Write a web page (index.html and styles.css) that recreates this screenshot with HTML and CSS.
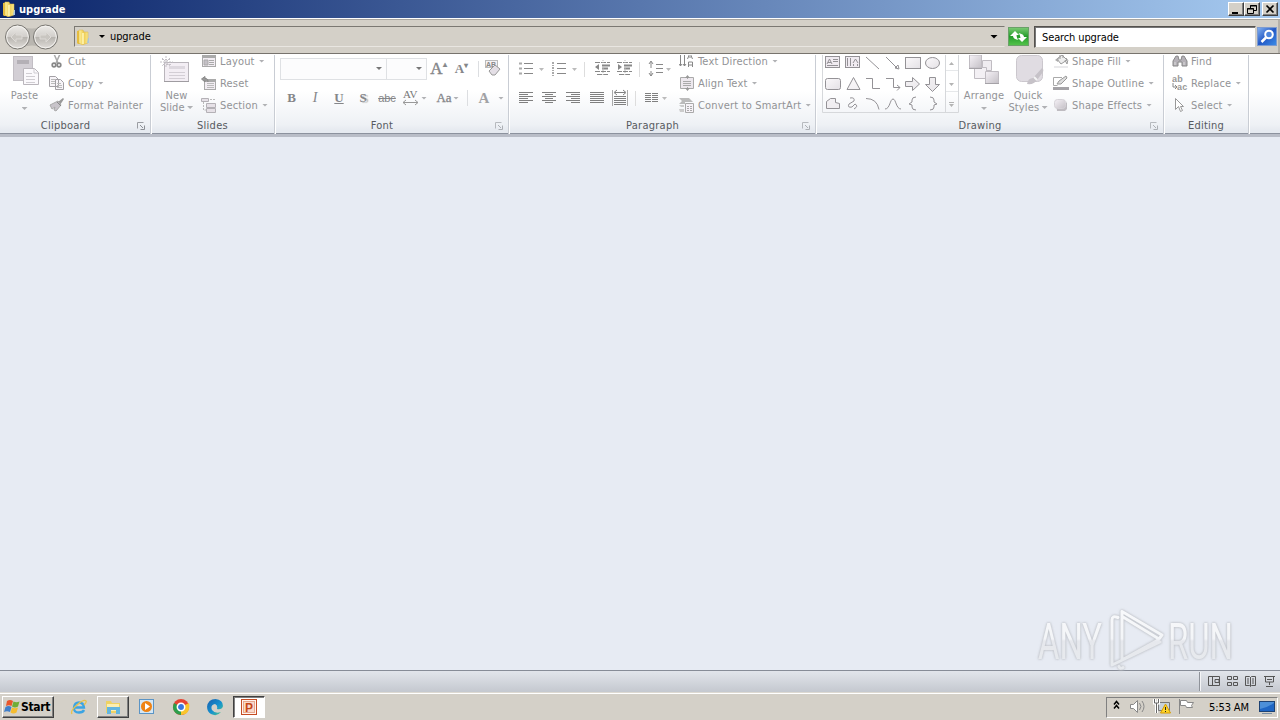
FILE: index.html
```html
<!DOCTYPE html>
<html lang="en">
<head>
<meta charset="utf-8">
<title>upgrade</title>
<link rel="stylesheet" href="styles.css">
</head>
<body>
<svg class="defs" width="0" height="0">
  <defs>
    <linearGradient id="gold" x2="1" y2="0"><stop stop-color="#fff3a0"/><stop offset=".5" stop-color="#eecb52"/><stop offset="1" stop-color="#f9e68a"/></linearGradient>
    <linearGradient id="grey" x2="1" y2="1"><stop stop-color="#f6f2f7"/><stop offset="1" stop-color="#c4c0c6"/></linearGradient>
    <linearGradient id="soft" x2="1" y2="1"><stop stop-color="#fbf9fb"/><stop offset="1" stop-color="#e4e1e5"/></linearGradient>
    <linearGradient id="ball" x2="0" y2="1"><stop stop-color="#eeece9"/><stop offset=".48" stop-color="#d2cfcb"/><stop offset=".52" stop-color="#b8b5b0"/><stop offset="1" stop-color="#e2dfdb"/></linearGradient>
    <linearGradient id="green" x2="0" y2="1"><stop stop-color="#7dcb75"/><stop offset=".5" stop-color="#259d2b"/><stop offset="1" stop-color="#55c44b"/></linearGradient>
    <linearGradient id="blue" x2="1" y2="1"><stop stop-color="#86b4f2"/><stop offset=".5" stop-color="#2459c5"/><stop offset="1" stop-color="#3d8ee8"/></linearGradient>
    <linearGradient id="edge" x2="1" y2="1"><stop stop-color="#1b5fae"/><stop offset=".55" stop-color="#1592cf"/><stop offset="1" stop-color="#54cd82"/></linearGradient>
    <linearGradient id="fade" gradientUnits="userSpaceOnUse" x1="0" y1="12" x2="0" y2="70"><stop stop-color="#fbfcfd"/><stop offset=".48" stop-color="#f6f7f9"/><stop offset=".52" stop-color="#e6e8ec"/><stop offset="1" stop-color="#e9ebef"/></linearGradient>
    <symbol id="folder" viewBox="0 0 16 16"><path d="M2 2l5-1v14H3l-1-1z" fill="#e7bd3e"/><path d="M4 1h4l1 2h4v11l-6 2-3-2z" fill="url(#gold)" stroke="#d9b54a" stroke-width=".5"/><path d="M8 4v11" stroke="#fff8bd" stroke-width="1.500"/><path d="M13 9h1v5h-2z" fill="#a9c6dc"/></symbol>
    <symbol id="launch" viewBox="0 0 8 8"><path d="M.5 6.500v-6h6" fill="none" stroke="#9a9da2"/><path d="M3 3l3 3M7.500 3.500v4h-4" fill="none" stroke="#8d9095"/></symbol>
  </defs>
</svg>

<header class="titlebar">
  <svg width="16" height="16"><use href="#folder"/></svg>
  <h1>upgrade</h1>
  <div class="winbtns">
    <svg width="16" height="14" class="wb"><path d="M3 10h6" stroke="#000" stroke-width="2"/></svg>
    <svg width="16" height="14" class="wb"><path d="M5.500 5V2.500h6v5H9M5 3h7M2.500 5.500h6v5h-6zM2 6h7" fill="none" stroke="#000"/></svg>
    <svg width="16" height="14" class="wb gap"><path d="M3.500 2.500l7 7M10.500 2.500l-7 7" stroke="#000" stroke-width="1.700"/></svg>
  </div>
</header>

<nav class="address">
  <svg class="navs" width="58" height="30" viewBox="0 0 58 30">
    <path d="M14 4Q29 9 44 4V26Q29 21 14 26z" fill="#b9b6b0"/>
    <g stroke="#777570"><circle cx="14.500" cy="15" r="12" fill="url(#ball)"/><circle cx="42.500" cy="15" r="12" fill="url(#ball)"/></g>
    <g fill="none" stroke="#f4f2ef"><circle cx="14.500" cy="15" r="10.800"/><circle cx="42.500" cy="15" r="10.800"/></g>
    <path d="M8 15l5-5v3h6v4h-6v3zM48 15l-5-5v3h-6v4h6v3z" fill="#c9c6c1" stroke="#dddad6"/>
  </svg>
  <div class="field">
    <svg width="16" height="16"><use href="#folder"/></svg>
    <i class="arr dark"></i><span class="crumb">upgrade</span><i class="arr dark big"></i>
  </div>
  <svg class="refresh" width="21" height="21"><rect x=".5" y="1.500" width="20" height="18" fill="url(#green)" stroke="#6aa068"/><path d="M2 10l5-5 4 4H8.500q0 3 2 5-5.500-1-5.500-4zM19 11l-5 5-4-4h2.500q0-3-2-5 5.500 1 5.500 4z" fill="#fff"/></svg>
  <div class="search">Search upgrade</div>
  <svg width="21" height="21"><rect x=".5" y="1.500" width="19" height="18" fill="url(#blue)" stroke="#7d9bd0"/><circle cx="12" cy="8.500" r="3.800" fill="#4d84dc" stroke="#fff" stroke-width="2"/><path d="M9 11.500l-4.500 4.500" stroke="#fff" stroke-width="2.500"/></svg>
</nav>

<section class="ribbon">
  <div class="group clipboard">
    <div class="body">
      <div class="bigbtn paste">
        <svg width="30" height="34" viewBox="0 0 30 34"><rect x="3.500" y="1.500" width="19" height="24" fill="#d3cfd5" stroke="#c2bec4"/><path d="M7 5h12v4H7z" fill="#b4b0b6"/><path d="M13.500 13.500h11l4 4v12h-15z" fill="#fbf9fc" stroke="#bab6bc"/><path d="M24 14v4h4M16 18.500h6M16 21.500h9M16 24.500h9M16 27.500h9" stroke="#d0cdd2" fill="none"/></svg>
        <span>Paste</span><i class="arr"></i>
      </div>
      <div class="list">
        <div class="row"><svg width="16" height="16"><path d="M5 1l4 9M11 1L7 10" stroke="#aaa" stroke-width="1.500"/><g fill="none" stroke="#888" stroke-width="1.700"><circle cx="5" cy="12" r="1.800"/><circle cx="10" cy="12" r="1.800"/></g></svg><span>Cut</span></div>
        <div class="row"><svg width="16" height="16"><g fill="#f7f4f8" stroke="#a3a0a5"><path d="M.5 1.500h6l3 3v7h-9zM6.500 4.500h5l3 3v7h-8z"/><path d="M2 4.500h4M2 6.500h4M2 8.500h4M8 8.500h4M8 10.500h5M8 12.500h5" stroke="#bbb"/></g></svg><span>Copy</span><i class="arr"></i></div>
        <div class="row"><svg width="16" height="16"><path d="M9 5l5-4 1 1-4 6z" fill="#999"/><path d="M1 8l8-4 3 4-5 6-2-1 1-3-3 2z" fill="#c8c4ca" stroke="#aaa"/><path d="M8 5l4 4" stroke="#888"/></svg><span>Format Painter</span></div>
      </div>
    </div>
    <footer>Clipboard<svg class="launch"><use href="#launch"/></svg></footer>
  </div>

  <div class="group slides">
    <div class="body">
      <div class="bigbtn new">
        <svg width="32" height="34" viewBox="0 0 32 34"><rect x="4.500" y="7.500" width="24" height="19" fill="#f3eef4" stroke="#b9b5bb"/><path d="M4 26.500h25" stroke="#9f9ca1"/><path d="M9 11h16v3H9z" fill="#ddd8df"/><path d="M9 17.500h16M9 20.500h16M9 23.500h16" stroke="#d3ced5"/><path d="M6 1v12M0 7h13M2 3l8 8M10 3l-8 8M2 4.500h9M3 9.500h8" stroke="#c4c0c6" stroke-dasharray="2 1"/></svg>
        <span>New</span><span>Slide <i class="arr"></i></span>
      </div>
      <div class="list">
        <div class="row"><svg width="16" height="16"><rect x="1.500" y="2.500" width="13" height="11" fill="#f2edf3" stroke="#aaa"/><path d="M2 4h12" stroke="#aaa" stroke-width="2"/><path d="M3 7h4v5H3zM8 7.500h5M8 9.500h5M8 11.500h5" fill="#c4c0c6" stroke="#aaa"/></svg><span>Layout</span><i class="arr"></i></div>
        <div class="row"><svg width="16" height="16"><rect x="3.500" y="4.500" width="11" height="10" fill="#f2edf3" stroke="#aaa"/><path d="M3 6h12" stroke="#aaa" stroke-width="2"/><path d="M6 8.500h7M6 10.500h7M6 12.500h7" stroke="#bbb"/><path d="M7 7Q7 3 4 3.500V1.500L.5 4l3.500 3V5" fill="#999" stroke="#888"/></svg><span>Reset</span></div>
        <div class="row"><svg width="16" height="16"><path d="M.5 1.500h7v3h-7zM5.500 6.500h9v4h-9zM5.500 11.500h9v4h-9z" fill="#e6e1e7" stroke="#b4b1b6"/><path d="M9 2.500h5M2.500 5v8H5" stroke="#bbb" stroke-dasharray="2 1" fill="none"/></svg><span>Section</span><i class="arr"></i></div>
      </div>
    </div>
    <footer>Slides</footer>
  </div>

  <div class="group font">
    <div class="body stack">
      <div class="tools first">
        <div class="combo wide"><i class="arr mid"></i></div><div class="combo"><i class="arr mid"></i></div>
        <b class="ic w23 grow">A<sup>▴</sup></b><b class="ic w23 shrink">A<sup>▾</sup></b><i class="sep"></i>
        <svg class="clear" width="20" height="18"><rect x=".5" y=".5" width="12" height="7" fill="#f4f2f5" stroke="#bbb"/><text x="1" y="7" class="tiny">AB</text><path d="M4 11l6-6 5 4-5 6H7z" fill="#e4dfe6" stroke="#999"/></svg>
      </div>
      <div class="tools second">
        <b class="ic w23">B</b><em class="ic w24">I</em><b class="ic w24 under">U</b><b class="ic w24 shade">S</b><s class="ic w24">abc</s>
        <svg width="19" height="18" class="av"><text x="1" y="9" class="avtext">AV</text><path d="M1 13.500h15M4 11l-3 2.500 3 2.500M13 11l3 2.500-3 2.500" fill="none" stroke="#999"/></svg><i class="arr"></i>
        <b class="ic aa">Aa</b><i class="arr"></i><i class="sep s2"></i><b class="ic w34">A</b><i class="arr"></i>
      </div>
    </div>
    <footer>Font<svg class="launch pale"><use href="#launch"/></svg></footer>
  </div>

  <div class="group paragraph">
    <div class="body">
      <div class="stack ptools">
        <div class="tools first">
          <svg width="154" height="20" fill="none" stroke="#888">
            <path d="M7 4.500h9M7 9.500h9M7 14.500h9M40 4.500h9M40 9.500h9M40 14.500h9"/>
            <path d="M2 4.500h3M2 9.500h3M2 14.500h3" stroke-width="2" stroke="#aaa"/><path d="M36 3v4M36 8v4M36 13v4" stroke="#aaa" stroke-width="2" stroke-dasharray="2 1"/>
            <path d="M22 9h5l-2.500 3zM55 9h5l-2.500 3zM149 9h5l-2.500 3z" fill="#bbb" stroke="none"/>
            <path d="M67.500 3v15M122.500 3v15" stroke="#ddd"/>
            <path d="M78 3.500h15M78 12.500h15M80 15.500h12M100 3.500h15M100 12.500h15M102 15.500h12" stroke-dasharray="5 1"/><path d="M85 6.500h8M107 6.500h8M85 9.500h6M107 9.500h6" stroke-width="2"/><path d="M82 5v6l-4-3zM101 5v6l4-3z" fill="#888" stroke="none"/><path d="M86 1v16M108 1v16" stroke="#bbb" stroke-dasharray="1"/>
            <path d="M134 3v6M134 12v5M132 5l2-3 2 3M132 14l2 3 2-3M139 5.500h7M139 9.500h7M139 13.500h7"/>
          </svg>
        </div>
        <div class="tools second">
          <svg width="154" height="20" fill="none" stroke="#808080">
            <path d="M2 4.500h14M2 6.500h9M2 8.500h14M2 10.500h9M2 12.500h14M2 14.500h9"/>
            <path d="M25 4.500h14M28 6.500h8M25 8.500h14M28 10.500h8M25 12.500h14M28 14.500h8"/>
            <path d="M49 4.500h14M54 6.500h9M49 8.500h14M54 10.500h9M49 12.500h14M54 14.500h9"/>
            <path d="M73 4.500h14M73 6.500h14M73 8.500h14M73 10.500h14M73 12.500h14M73 14.500h14"/>
            <path d="M97 8.500h12M97 10.500h12M97 12.500h12M97 14.500h12M97 16.500h12M98 4.500h10M100 2l-3 2.500 3 2.500M106 2l3 2.500-3 2.500"/><path d="M95.500 2v16M110.500 2v16" stroke="#aaa"/><path d="M118.500 3v15" stroke="#ddd"/>
            <path d="M128 5.500h6M128 7.500h6M128 9.500h6M128 11.500h6M128 13.500h6M135 5.500h6M135 7.500h6M135 9.500h6M135 11.500h6M135 13.500h6"/>
            <path d="M145 9h5l-2.500 3z" fill="#bbb" stroke="none"/>
          </svg>
        </div>
      </div>
      <div class="list plist">
        <div class="row"><svg width="16" height="16" fill="none" stroke="#888"><path d="M1.500 1v12M5.500 1v12M0 11l1.500 2 1.500-2M4 11l1.500 2 1.500-2M9.500 14V9h4v5M9 12h5M8.500 6l2.500-6 2.500 6M9.500 4h3"/></svg><span>Text Direction</span><i class="arr"></i></div>
        <div class="row"><svg width="16" height="16"><path d="M1.500 2.500h13v11h-13z" fill="#ede8ee" stroke="#aaa"/><path d="M4 6.500h8M4 8.500h8M4 10.500h8M8.500 1v3M8.500 12v3" stroke="#aaa"/><path d="M6 3h5L8.500 0zM6 13h5l-2.500 3z" fill="#999"/></svg><span>Align Text</span><i class="arr"></i></div>
        <div class="row"><svg width="16" height="16"><path d="M0 1h10l4 4H6v2H0l3-3z" fill="#bbb"/><path d="M6.500 6.500h8v9h-8z" fill="#f6f2f7" stroke="#aaa"/><path d="M8 9.500h2M11 9.500h2M8 11.500h2M11 11.500h2M8 13.500h2M11 13.500h2" stroke="#aaa"/><path d="M0 8h5v2H2zM0 12h5v3H1z" fill="#ccc"/></svg><span>Convert to SmartArt</span><i class="arr"></i></div>
      </div>
    </div>
    <footer>Paragraph<svg class="launch pale"><use href="#launch"/></svg></footer>
  </div>

  <div class="group drawing">
    <div class="body">
      <svg class="gallery" width="137" height="63" viewBox="0 0 137 63" fill="none" stroke="#949296">
        <path d="M.5 0v62.500h136V0M123.500 0v62" stroke="#d6d8db"/><path d="M124 20.500h12M124 41.500h12" stroke="#e6e8ea"/>
        <path d="M127 15h5l-2.500-3zM127 33h5l-2.500 3zM127 54h5l-2.500 3zM127 52h5v1h-5z" fill="#b4b4b4" stroke="none"/>
        <rect x="3.500" y="6.500" width="14" height="11" fill="#f0ebf1"/><path d="M5 14l2.500-5 2.500 5M6 12.500h3M11 9.500h5M11 11.500h5M5 15.500h11"/>
        <rect x="23.500" y="6.500" width="14" height="11" fill="#f0ebf1"/><path d="M25.500 8v8M28.500 8v8M31.500 14v2M31 13l2.500-4 2.500 4M35.500 14v2"/>
        <path d="M44 7l13 12M64 7l12 12M77 19l-4-1 3-3z"/>
        <g fill="url(#soft)"><rect x="83.500" y="7.500" width="15" height="11"/><ellipse cx="110.500" cy="13" rx="7" ry="5.500"/><rect x="3.500" y="28.500" width="15" height="11" rx="2"/><path d="M31.500 27.500l6.500 12H25zM83.500 31.500h7v-4l7 6.500-7 6.500v-4h-7zM107.500 27.500h6v7h4l-7 7-7-7h4zM4.500 51.500l4-3h5v4l4 1v5h-13z"/></g>
        <path d="M44 28.500h6.500v10H58M64 28.500h7.500v9H78M75 35l3 2.500-3 3M28 48q5-1 4 3l-5 3q-2 4 3 3l3-3q4 2-1 5M44 48.500q11 0 13 11M63 59c5 0 5-10 8-10s3 10 8 10M94 47q-4 0-4 3v2l-3 2 3 1v2q0 3 4 3M108 47q4 0 4 3v2l3 2-3 1v2q0 3-4 3"/>
      </svg>
      <div class="bigbtn arrange"><svg width="34" height="34" viewBox="0 0 34 34"><g stroke="#c0bcc2"><path d="M15.500 5.500h9v10h-9z" fill="#efecf0"/><path d="M7.500 12.500h12v11h-12z" fill="#f3f0f4"/><path d="M2.500 0h12v13h-12z" fill="url(#grey)"/><path d="M18.500 16.500h13v12h-13z" fill="url(#grey)"/></g><path d="M18 28.500h14M2 13.500h13" stroke="#a5a2a7"/></svg><span>Arrange</span><i class="arr"></i></div>
      <div class="bigbtn quick"><svg width="34" height="34" viewBox="0 0 34 34"><rect x="4.500" y=".5" width="26" height="26" rx="5" fill="#e0dce2" stroke="#cbc7cd"/><path d="M15 29q1-6 6-6l9-10q2 1 1 4l-6 8q-3 5-10 4z" fill="#c6c2c8"/><path d="M22 22l3 3" stroke="#f4f4f4" stroke-width="2"/></svg><span>Quick</span><span>Styles <i class="arr"></i></span></div>
      <div class="list">
        <div class="row"><svg width="16" height="16"><path d="M4 6l5-4 5 5-6 4z" fill="#eee" stroke="#999"/><path d="M13 5q3 2 1 6l-2-4M7 6V1h3v4" fill="none" stroke="#999"/><path d="M2 7l4-3-1 5z" fill="#aaa"/><path d="M1 13h14v2H1z" fill="#eaeaec"/></svg><span>Shape Fill</span><i class="arr"></i></div>
        <div class="row"><svg width="16" height="16"><path d="M9 2.500H.5v8h4" fill="none" stroke="#aaa"/><path d="M4 9l2-3 7-5 1 2-6 6z" fill="#ddd" stroke="#999"/><path d="M0 12h16v3H0z" fill="#a5a3a7"/></svg><span>Shape Outline</span><i class="arr"></i></div>
        <div class="row"><svg width="16" height="16"><path d="M3 5q10 5 11-1v8l-2 2H4z" fill="#bfbcc1"/><rect x="1.500" y="2.500" width="11" height="9" rx="3" fill="url(#grey)" stroke="#d6d3d8"/></svg><span>Shape Effects</span><i class="arr"></i></div>
      </div>
    </div>
    <footer>Drawing<svg class="launch pale"><use href="#launch"/></svg></footer>
  </div>

  <div class="group editing">
    <div class="body">
      <div class="list">
        <div class="row"><svg width="16" height="16"><path d="M1 13V8l3-5h2l1 4h2l1-4h2l3 5v5h-5V9H6v4z" fill="#b5b1b7" stroke="#888"/><path d="M3 9v3M12 9v3M4 2h2M10 2h2" stroke="#ddd"/></svg><span>Find</span></div>
        <div class="row"><svg width="16" height="16"><text x="0" y="7" class="abtext">ab</text><text x="5" y="15" class="abtext">ac</text><path d="M1 8v4h4M3 10l2 2-2 2" fill="none" stroke="#888"/></svg><span>Replace</span><i class="arr"></i></div>
        <div class="row"><svg width="16" height="16"><path d="M3.500 1.500v11l3-3 2 5 2-1-2-4h3z" fill="#fff" stroke="#999"/></svg><span>Select</span><i class="arr"></i></div>
      </div>
    </div>
    <footer>Editing</footer>
  </div>
</section>

<main class="workspace">
  <svg class="mark" width="220" height="76" viewBox="0 0 220 76">
    <g class="glow"><text x="10" y="60" textLength="64" lengthAdjust="spacingAndGlyphs">ANY</text><text x="140" y="60" textLength="65" lengthAdjust="spacingAndGlyphs">RUN</text>
    <path d="M90 18.500Q84 16 84 21V66L132 43M95 68.500q-3 2-4-1M94 12.500L134 36L131 40L95 18M94 12.500V61L130 41M94 26V58"/></g>
  </svg>
</main>

<div class="status">
  <svg width="82" height="21" fill="none" stroke="#555">
    <path d="M1.500 1v19" stroke="#8f939a"/><path d="M2.500 1v19" stroke="#f4f5f7"/>
    <path d="M10.500 5.500h11v9h-11zM14.500 6v8M17 8.500h4v3h-4z"/>
    <path d="M29.500 5.500h4v3h-4zM35.500 5.500h4v3h-4zM29.500 11.500h4v3h-4zM35.500 11.500h4v3h-4z"/>
    <path d="M47.500 5.500h4l1 1 1-1h4v9h-4l-1 1-1-1h-4zM52.500 6v9M49 8h2M49 10h2M49 12h2M54 8h2M54 10h2M54 12h2"/>
    <path d="M66 5.500h11M67.500 6v5h8V6M71.500 11v3M68 15.500h7M69 8.500h5"/>
  </svg>
</div>

<footer class="taskbar">
  <div class="start"><svg width="17" height="16"><path d="M3 2q3-2 6 0L7.500 7Q5 5.500 2 7z" fill="#e9562b"/><path d="M9.500 2.500q3 1.500 6 0L14 7.500q-3 2-6 0z" fill="#70ad37"/><path d="M1.500 8q3-2 6 0L6 13Q3 11.500 0 13z" fill="#407fca"/><path d="M8 8.500q3 1.500 6 0L12.500 13.500q-3 2-6 0z" fill="#f5bc2f"/></svg>Start</div>
  <div class="task"><svg width="18" height="18"><path d="M4.500 9.500h9.500Q13.500 4.500 9 4.500T4 9.500 9 14.500q4 0 5-2.500" fill="none" stroke="#3ba4e3" stroke-width="2.300"/><path d="M2 16Q0 13 7 7t9-4q1 1-2 4" fill="none" stroke="#e9c24a" stroke-width="1.300"/></svg></div>
  <div class="task open"><svg width="18" height="18"><path d="M2 3h5l1 2h8v10H2z" fill="#eed264"/><path d="M3 6h12v7H3z" fill="#fbeeb0"/><path d="M3 9h13v7h-4v-4H7v4H3z" fill="#62b5df"/></svg></div>
  <div class="task"><svg width="18" height="18"><rect x="1.500" y="1.500" width="14" height="14" fill="#d5e7f5" stroke="#5b94c5"/><circle cx="8.500" cy="8.500" r="5.500" fill="#ef8314"/><path d="M7 5l5 3.500L7 12z" fill="#fff"/></svg></div>
  <div class="task"><svg width="18" height="18"><circle cx="9" cy="9" r="8" fill="#e64332"/><path d="M9 9L2 5Q-1 12 5 16l4 1z" fill="#2c9e4c"/><path d="M9 9l8-4q2 11-8 12z" fill="#f9c52b"/><circle cx="9" cy="9" r="3.700" fill="#3978df" stroke="#fff" stroke-width="1.500"/></svg></div>
  <div class="task"><svg width="18" height="18"><path d="M1 9Q2 1 9.500 1 17 2 17 8q-1 4-6 3 1-4-2-5-5 1-3 6 3 4 9 2-4 5-10 2-4-2-4-8z" fill="url(#edge)"/></svg></div>
  <div class="task active"><svg width="18" height="18"><rect x="1.500" y="1.500" width="15" height="15" fill="#fff4ed" stroke="#c54c22"/><rect x="3.500" y="3.500" width="11" height="11" fill="#f8d9ca" stroke="#e8a78e"/><text x="5" y="14" class="ppt">P</text></svg></div>
  <div class="tray">
    <svg width="100" height="20" fill="none">
      <path d="M7 7.500l2.500-3 2.500 3M7 11.500l2.500-3 2.500 3" stroke="#000" stroke-width="1.500"/>
      <path d="M23.500 7.500h3l4-4v12l-4-4h-3z" fill="#fff" stroke="#888"/><path d="M32.500 6q3 3.500 0 7M35 4q4 5.500 0 11" stroke="#888"/>
      <path d="M51.500 5.500h11v8h-11z" fill="#c7d1d9" stroke="#777"/><path d="M47.500 2v4h4V2M49.500 6v10" stroke="#fff" stroke-width="3"/><path d="M47.500 2v4h4V2M49.500 6v10" stroke="#666"/><path d="M58.500 7l5 9h-10z" fill="#ffd52b" stroke="#d69c00"/><path d="M58.500 10v3M58.500 14v1" stroke="#222"/>
      <path d="M72.500 2v15" stroke="#888"/><path d="M73.500 3.500h6l1 2h6l-2 3 1 2h-6l-1-2h-5z" fill="#fff" stroke="#888"/>
    </svg>
    <span class="clock">5:53 AM</span>
    <svg width="16" height="15"><rect x=".5" y="1.500" width="15" height="10" fill="#1f66c4" stroke="#1d4273"/><path d="M1 9q7-1 14-6V2H1z" fill="#4c8fd8"/><path d="M3 13.500h10" stroke="#7b8fa3"/></svg>
  </div>
</footer>
</body>
</html>
```
FILE: styles.css
```css
* { box-sizing: border-box; }
body { margin: 0; width: 1280px; height: 720px; overflow: hidden; display: flex; flex-direction: column; font: 11px "DejaVu Sans Condensed", "DejaVu Sans", sans-serif; color: #000; background: #e7ebf3; }
svg { flex: none; display: block; }
.defs { position: absolute; }

.titlebar { height: 18px; flex: none; display: flex; align-items: center; padding: 0 2px 0 1px; background: linear-gradient(90deg, #0a246a, #a6caf0); color: #fff; }
.titlebar h1 { margin: 0 0 0 2px; font-size: 11px; font-weight: bold; letter-spacing: 0; }
.winbtns { display: flex; margin-left: auto; }
.wb { background: #d4d0c8; border: 1px solid; border-color: #fff #404040 #404040 #fff; box-shadow: inset -1px -1px #808080; }
.wb.gap { margin-left: 2px; }

.address { height: 36px; flex: none; display: flex; align-items: center; padding: 1px 2px 0 3px; background: #d4d0c8; border-top: 1px solid #fff; border-bottom: 1px solid #77736d; box-shadow: inset 0 1px #aaa69f, inset -2px 0 #b5b1aa; }
.field { width: 931px; height: 21px; margin-left: 13px; display: flex; align-items: center; border: 1px solid; border-color: #7b7872 #d4d0c8 #e9e6e1 #7b7872; }
.crumb { margin-left: 5px; letter-spacing: -.1px; }
.arr { display: inline-block; flex: none; width: 6px; height: 3px; background: #b0b1b4; clip-path: polygon(0 0, 100% 0, 50% 100%); margin-left: 4px; vertical-align: 2px; }
.arr.dark { background: #000; margin-left: 8px; }
.arr.big { width: 8px; height: 4px; margin: 0 6px 0 auto; }
.arr.mid { background: #777; }
.refresh { margin-left: 3px; }
.search { width: 222px; height: 22px; margin: 0 1px 0 5px; padding: 1px 0 0 7px; line-height: 20px; letter-spacing: -.12px; background: #fff; border: 1px solid; border-color: #55524e #d4d0c8 #d4d0c8 #55524e; box-shadow: inset 1px 1px #777; }

.ribbon { height: 83px; flex: none; display: flex; overflow: hidden; background: linear-gradient(#fff 0, #fff 45%, #eef1f5 88%, #e6eaf0 95%); border-bottom: 3px solid #b9bdc7; border-top: 1px solid #fff; box-shadow: inset 0 -1px #8c929e; }
.group { display: flex; flex-direction: column; flex: none; border-right: 1px solid #c9cdd4; margin-top: -5px; height: 84px; box-shadow: 1px 0 #fff; color: #929396; }
.clipboard { width: 151px; } .slides { width: 124px; } .font { width: 234px; } .paragraph { width: 307px; } .drawing { width: 348px; } .editing { width: 85px; }
.body { height: 66px; flex: none; display: flex; }
.body.stack { flex-direction: column; }
.group footer { height: 18px; display: flex; align-items: center; justify-content: center; position: relative; color: #575a60; letter-spacing: .25px; padding-right: 19px; }
.slides footer, .editing footer { padding-right: 0; }
.launch { position: absolute; right: 5px; top: 6px; width: 8px; height: 8px; }
.launch.pale { opacity: .65; }
.list { padding-left: 5px; }
.row { height: 22px; display: flex; align-items: center; white-space: nowrap; letter-spacing: .17px; }
.row span { margin-left: 3px; }
.bigbtn { display: flex; flex-direction: column; align-items: center; line-height: 12px; padding-top: 5px; letter-spacing: .15px; }
.bigbtn > span { white-space: nowrap; }
.bigbtn > svg { margin-bottom: 1px; }
.bigbtn > .arr { margin: 5px 0 0; }
.bigbtn span .arr { margin-left: -1px; }
.paste { width: 44px; padding-left: 5px; }
.new { width: 45px; padding-left: 6px; }
.new > svg { margin-left: -2px; }
.arrange { width: 50px; }
.quick { width: 40px; }
.quick > span { margin-left: -2px; }

.tools { display: flex; align-items: center; }
.first { height: 37px; }
.second { height: 22px; }
.font .body { padding-left: 5px; }
.combo { width: 40px; height: 22px; border: 1px solid #dfe1e4; border-left: 0; display: flex; align-items: center; justify-content: flex-end; padding-right: 4px; background: #fcfcfd; }
.combo.wide { width: 107px; border-left: 1px solid #dfe1e4; }
.ic { font: bold 13px "Liberation Serif", serif; color: #858689; text-align: center; flex: none; }
.w23 { width: 23px; } .w24 { width: 24px; } .w34 { width: 32px; font-size: 15px; color: #a2a2a5; }
em.ic { font-style: italic; font-weight: normal; font-size: 14px; }
.grow { font-size: 17px; font-weight: normal; -webkit-text-stroke: .4px #858689; } .shrink { font-size: 13px; }
.ic sup { font-size: 8px; line-height: 0; }
.under { text-decoration: underline; }
.shade { text-shadow: 2px 1px 1px #bbb; }
s.ic { font: 11px "Liberation Sans", sans-serif; }
.av { margin-left: 3px; }
.av + .arr { margin-left: 0; }
.aa { margin-left: 8px; width: 18px; font-weight: normal; -webkit-text-stroke: .3px #858689; }
.aa + .arr { margin-left: 0; }
.sep { width: 1px; height: 16px; background: #dcdee1; margin: 0 3px 0 5px; }
.sep.s2 { margin: 0 0 0 8px; }
.w34 + .arr { margin-left: -2px; }
.clear { margin-left: 3px; }
.tiny { font: bold 7px "Liberation Sans", sans-serif; fill: #888; }
.avtext { font: 11px "Liberation Serif", serif; fill: #777; }
.abtext { font: bold 9px "Liberation Sans", sans-serif; fill: #999; }
.ptools { width: 165px; padding-left: 8px; }
.plist { padding-left: 5px; }
.gallery { margin-left: 6px; }
.drawing .list { padding-left: 4px; }
.editing .list { padding-left: 8px; }

.workspace { flex: 1; position: relative; background: #e7ebf3; }
.mark { position: absolute; right: 32px; bottom: -5px; z-index: 1; overflow: visible; }
.mark text { font: 50px Roboto, sans-serif; fill: url(#fade); stroke: none; }
.glow { filter: drop-shadow(0 0 1px #b8bbc1) drop-shadow(0 0 1px #c9ccd2); fill: none; stroke: url(#fade); stroke-width: 3; stroke-linejoin: round; stroke-linecap: round; opacity: .85; }

.status { height: 23px; flex: none; display: flex; justify-content: flex-end; background: linear-gradient(#e2e5eb, #c4c8cf); border-top: 1px solid #878c97; border-bottom: 1px solid #ddd9d2; }
.taskbar { height: 27px; flex: none; display: flex; align-items: center; padding: 0 2px; background: #d4d0c8; border-top: 1px solid #fff; }
.start { width: 52px; height: 22px; display: flex; align-items: center; font-weight: bold; font-size: 12px; letter-spacing: -.35px; padding-left: 1px; border: 1px solid; border-color: #fff #404040 #404040 #fff; box-shadow: inset -1px -1px #808080; margin-right: 9px; }
.task { width: 32px; height: 22px; margin-right: 2px; display: flex; align-items: center; justify-content: center; border: 1px solid transparent; }
.task.open { border-color: #fff #404040 #404040 #fff; box-shadow: inset -1px -1px #808080; }
.task.active { background: #fff; border-color: #404040 #fff #fff #404040; box-shadow: inset 1px 1px #808080; }
.ppt { font: bold 12px "Liberation Sans", sans-serif; fill: #c74818; }
.tray { width: 172px; height: 21px; margin-left: auto; display: flex; align-items: center; border: 1px solid; border-color: #808080 #fff #fff #808080; }
.clock { margin: 0 10px 0 2px; white-space: nowrap; letter-spacing: -.1px; }
```
